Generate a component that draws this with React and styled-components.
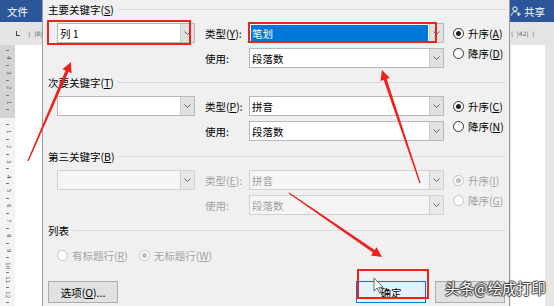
import React from 'react';
import styled, { createGlobalStyle } from 'styled-components';

const RED = '#f0211b';

// tapered annotation arrow, tail -> tip
const arrow = (from, to, tail = 0.6, neck = 1.6, headW = 5, headL = 10) => {
  const [x1, y1] = from;
  const [x2, y2] = to;
  const len = Math.hypot(x2 - x1, y2 - y1);
  const ux = (x2 - x1) / len;
  const uy = (y2 - y1) / len;
  const nx = -uy;
  const ny = ux;
  const bx = x2 - ux * headL;
  const by = y2 - uy * headL;
  const pts = [
    [x1 + nx * tail, y1 + ny * tail],
    [bx + nx * neck, by + ny * neck],
    [bx + nx * headW, by + ny * headW],
    [x2, y2],
    [bx - nx * headW, by - ny * headW],
    [bx - nx * neck, by - ny * neck],
    [x1 - nx * tail, y1 - ny * tail],
  ];
  return pts.map((p) => p.map((v) => v.toFixed(1)).join(',')).join(' ');
};

const rulerMarks = Array.from({ length: 35 }, (_, i) => {
  if (i % 2 === 0) return null;
  if (i < 9) return String(4 - (i - 1) / 2);
  if (i === 9) return '';
  return String((i - 9) / 2);
});

const groups = [
  { title: '主要关键字', key: 'S', main: '列 1', type: '笔划', typeKey: 'Y', typeSelected: true, use: '段落数', asc: 'A', desc: 'D', top: 0 },
  { title: '次要关键字', key: 'T', main: '', type: '拼音', typeKey: 'P', use: '段落数', asc: 'C', desc: 'N', top: 6 },
  { title: '第三关键字', key: 'B', main: '', type: '拼音', typeKey: 'E', use: '段落数', asc: 'I', desc: 'G', disabled: true, top: 7 },
];

const Key = ({ k }) => (
  <>
    (<u>{k}</u>)
  </>
);

const Chevron = () => (
  <svg width="7" height="4" viewBox="0 0 7 4">
    <polyline points="0.5,0.5 3.5,3.5 6.5,0.5" fill="none" stroke="#666" strokeWidth="1" />
  </svg>
);

const ShareIcon = () => (
  <svg width="10" height="10" viewBox="0 0 10 10">
    <circle cx="4" cy="3" r="2.2" fill="none" stroke="#fff" strokeWidth="1" />
    <path d="M0.5 9.5 C1 6.8 2.5 5.6 4 5.6 C5 5.6 5.8 6 6.3 6.6" fill="none" stroke="#fff" strokeWidth="1" />
    <path d="M7.8 6.2 V10 M5.9 8.1 H9.7" stroke="#fff" strokeWidth="1" />
  </svg>
);

const ComboBox = ({ value, selected, disabled }) => (
  <Combo $disabled={disabled}>
    <ComboText $selected={selected} $disabled={disabled}>{value}</ComboText>
    <DropButton $disabled={disabled}>
      <Chevron />
    </DropButton>
  </Combo>
);

const Radio = ({ label, k, checked, disabled }) => (
  <RadioItem $disabled={disabled}>
    <RadioDot $checked={checked} $disabled={disabled} />
    <span>
      {label}
      <Key k={k} />
    </span>
  </RadioItem>
);

const KeyGroup = ({ g }) => (
  <Group $top={g.top}>
    <Header>
      <span>
        {g.title}
        <Key k={g.key} />
      </span>
      <Rule />
    </Header>
    <KeyGrid>
      <ComboBox value={g.main} disabled={g.disabled} />
      <FieldLabel $disabled={g.disabled}>
        类型<Key k={g.typeKey} />:
      </FieldLabel>
      <ComboBox value={g.type} selected={g.typeSelected} disabled={g.disabled} />
      <RadioCol>
        <Radio label="升序" k={g.asc} checked disabled={g.disabled} />
        <Radio label="降序" k={g.desc} disabled={g.disabled} />
      </RadioCol>
      <div />
      <FieldLabel $disabled={g.disabled}>使用:</FieldLabel>
      <ComboBox value={g.use} disabled={g.disabled} />
    </KeyGrid>
  </Group>
);

const App = () => {
  return (
    <Screen>
      <GlobalStyle />
      <WordSide $w={42}>
        <TitleBar>文件</TitleBar>
        <HRuler>
          <TabStop />
          <RulerText $left={8}>|&nbsp;&nbsp;|8|</RulerText>
        </HRuler>
        <DocArea>
          <VRuler>
            {rulerMarks.map((m, i) =>
              m === null ? <Tick key={i} /> : <RulerNum key={i}>{m}</RulerNum>
            )}
          </VRuler>
          <Page />
        </DocArea>
      </WordSide>

      <Dialog>
        {groups.map((g) => (
          <KeyGroup key={g.key} g={g} />
        ))}
        <Group $top={7}>
          <Header>
            <span>列表</span>
            <Rule />
          </Header>
          <ListRow>
            <Radio label="有标题行" k="R" disabled />
            <Radio label="无标题行" k="W" checked disabled />
          </ListRow>
        </Group>
        <ButtonRow>
          <Button>
            选项(<u>O</u>)...
          </Button>
          <Button $primary>确定</Button>
          <Button />
        </ButtonRow>
      </Dialog>

      <WordSide $w={44}>
        <TitleBar $right>
          <ShareIcon />
          共享
        </TitleBar>
        <HRuler>
          <RulerText $left={1}>|&nbsp;&nbsp;|42|&nbsp;&nbsp;|</RulerText>
        </HRuler>
        <DocArea>
          <Page $w={34} $ml={1} />
        </DocArea>
      </WordSide>

      <Mark $x={47} $y={20} $w={144} $h={25} />
      <Mark $x={248} $y={22} $w={189} $h={21} />
      <Mark $x={357} $y={269} $w={72} $h={30} />

      <Annotations width="554" height="306" viewBox="0 0 554 306">
        <polygon points={arrow([28, 161], [71, 62])} fill={RED} />
        <polygon points={arrow([420, 183], [382, 70])} fill={RED} />
        <polygon points={arrow([289, 193], [382, 257])} fill={RED} />
        <polygon
          points="374,278 374,291 377,288 379.5,293 381.2,292.2 378.8,287.4 383,287.4"
          fill="#fff"
          stroke="#444"
          strokeWidth="0.8"
          strokeLinejoin="round"
        />
      </Annotations>

      <Watermark>头条@绘成打印</Watermark>
    </Screen>
  );
};

export default App;

const GlobalStyle = createGlobalStyle`
  html, body {
    margin: 0;
    padding: 0;
  }
  body {
    font-family: "Noto Sans CJK SC", "Noto Sans", sans-serif;
    background: #fff;
  }
`;

const Screen = styled.div`
  position: relative;
  width: 554px;
  height: 306px;
  overflow: hidden;
  display: flex;
`;

const WordSide = styled.div`
  width: ${(p) => p.$w}px;
  flex: none;
  display: flex;
  flex-direction: column;
  background: #e6e6e6;
`;

const TitleBar = styled.div`
  height: 22px;
  flex: none;
  background: #2b579a;
  color: #fff;
  font-size: 10.5px;
  display: flex;
  align-items: center;
  gap: 3px;
  padding-left: ${(p) => (p.$right ? '1px' : '7px')};
`;

const HRuler = styled.div`
  height: 23px;
  flex: none;
  display: flex;
  align-items: center;
  background: #e4e4e4;
`;

const TabStop = styled.span`
  width: 4px;
  height: 4px;
  margin-left: 16px;
  border-left: 1.5px solid #444;
  border-bottom: 1.5px solid #444;
`;

const RulerText = styled.span`
  margin-left: ${(p) => p.$left}px;
  font-family: "DejaVu Sans", sans-serif;
  font-size: 6px;
  color: #666;
  white-space: nowrap;
`;

const DocArea = styled.div`
  flex: 1;
  display: flex;
  min-height: 0;
`;

const VRuler = styled.div`
  width: 15px;
  flex: none;
  display: flex;
  flex-direction: column;
  align-items: center;
  padding-top: 2px;
  background: linear-gradient(#d4d4d4 0 73px, #f4f4f4 73px);
`;

const Tick = styled.span`
  height: 7.5px;
  display: flex;
  align-items: center;
  &::before {
    content: '';
    width: 3px;
    height: 1px;
    background: #777;
  }
`;

const RulerNum = styled.span`
  height: 7.5px;
  line-height: 7.5px;
  font-family: "DejaVu Sans", sans-serif;
  font-size: 5.5px;
  color: #555;
  transform: rotate(90deg);
`;

const Page = styled.div`
  width: ${(p) => (p.$w ? `${p.$w}px` : 'auto')};
  flex: ${(p) => (p.$w ? 'none' : '1')};
  margin-left: ${(p) => p.$ml || 0}px;
  background: #fff;
`;

const Dialog = styled.div`
  width: 468px;
  flex: none;
  box-sizing: border-box;
  background: #f0f0f0;
  border-left: 1px solid #9c9c9c;
  border-right: 1px solid #9c9c9c;
  padding: 1px 4px 0 5px;
  display: flex;
  flex-direction: column;
  font-size: 10.5px;
  color: #000;
`;

const Group = styled.div`
  margin-top: ${(p) => p.$top}px;
  display: flex;
  flex-direction: column;
`;

const Header = styled.div`
  height: 16px;
  display: flex;
  align-items: center;
  gap: 4px;
  white-space: nowrap;
`;

const Rule = styled.div`
  flex: 1;
  height: 1px;
  background: #dadada;
`;

const KeyGrid = styled.div`
  display: grid;
  grid-template-columns: 138px 54px 195px 1fr;
  grid-template-rows: 20px 20px;
  row-gap: 5px;
  margin: 6px 0 0 9px;
`;

const FieldLabel = styled.div`
  display: flex;
  align-items: center;
  padding-left: 10px;
  color: ${(p) => (p.$disabled ? '#a3a3a3' : '#000')};
  white-space: nowrap;
`;

const Combo = styled.div`
  display: flex;
  height: 20px;
  box-sizing: border-box;
  border: 1px solid ${(p) => (p.$disabled ? '#d2d2d2' : '#b8b8b8')};
  background: ${(p) => (p.$disabled ? '#f5f5f5' : '#fff')};
`;

const ComboText = styled.div`
  flex: 1;
  display: flex;
  align-items: center;
  margin: 1px;
  padding-left: 1px;
  background: ${(p) => (p.$selected ? '#0078d7' : 'transparent')};
  color: ${(p) => (p.$selected ? '#fff' : p.$disabled ? '#a3a3a3' : '#000')};
  white-space: nowrap;
`;

const DropButton = styled.div`
  width: 13px;
  flex: none;
  display: flex;
  align-items: center;
  justify-content: center;
  background: ${(p) => (p.$disabled ? '#e8e8e8' : '#e1e1e1')};
  border-left: 1px solid #cdcdcd;
`;

const RadioCol = styled.div`
  grid-column: 4;
  grid-row: 1 / span 2;
  display: flex;
  flex-direction: column;
  padding-left: 9px;
`;

const RadioItem = styled.div`
  height: 20px;
  display: flex;
  align-items: center;
  gap: 4px;
  white-space: nowrap;
  color: ${(p) => (p.$disabled ? '#a3a3a3' : '#000')};
`;

const RadioDot = styled.span`
  width: 11px;
  height: 11px;
  flex: none;
  box-sizing: border-box;
  border-radius: 50%;
  border: 1px solid ${(p) => (p.$disabled ? '#c4c4c4' : '#333')};
  background: #fff;
  display: flex;
  align-items: center;
  justify-content: center;
  &::after {
    content: '';
    display: ${(p) => (p.$checked ? 'block' : 'none')};
    width: 5px;
    height: 5px;
    border-radius: 50%;
    background: ${(p) => (p.$disabled ? '#bdbdbd' : '#222')};
  }
`;

const ListRow = styled.div`
  display: flex;
  gap: 11px;
  margin: 7px 0 0 9px;
`;

const ButtonRow = styled.div`
  display: flex;
  gap: 9px;
  margin-top: 16px;
  & > :nth-child(2) {
    margin-left: auto;
  }
`;

const Button = styled.div`
  width: 70px;
  height: 22px;
  box-sizing: border-box;
  display: flex;
  align-items: center;
  justify-content: center;
  border: 1px solid ${(p) => (p.$primary ? '#0078d7' : '#adadad')};
  background: ${(p) => (p.$primary ? '#e5f1fb' : '#e1e1e1')};
  white-space: nowrap;
`;

const Mark = styled.div`
  position: absolute;
  left: ${(p) => p.$x}px;
  top: ${(p) => p.$y}px;
  width: ${(p) => p.$w}px;
  height: ${(p) => p.$h}px;
  box-sizing: border-box;
  border: 2px solid ${RED};
  pointer-events: none;
`;

const Annotations = styled.svg`
  position: absolute;
  left: 0;
  top: 0;
  pointer-events: none;
`;

const Watermark = styled.div`
  position: absolute;
  left: 445px;
  top: 279px;
  font-size: 14.5px;
  line-height: 18px;
  color: #fff;
  white-space: nowrap;
  text-shadow: 1px 0 1px #333, -1px 0 1px #333, 0 1px 1px #333, 0 -1px 1px #333;
`;
